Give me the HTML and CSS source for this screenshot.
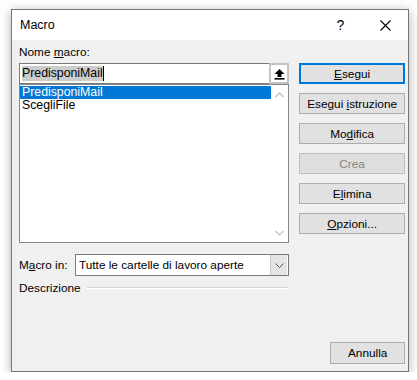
FILE: index.html
```html
<!DOCTYPE html>
<html lang="it">
<head>
<meta charset="utf-8">
<title>Macro</title>
<link rel="stylesheet" href="styles.css">
</head>
<body>
<div class="dialog">
  <div class="titlebar">
    <span class="title">Macro</span>
    <span class="cap-btn help">?</span>
    <span class="cap-btn close">
      <svg width="11" height="11" viewBox="0 0 11 11"><path d="M0.5 0.5 L10.5 10.5 M10.5 0.5 L0.5 10.5" stroke="#000" stroke-width="1.1" fill="none"/></svg>
    </span>
  </div>
  <div class="body">
    <div class="left">
      <div class="label">Nome <u>m</u>acro:</div>
      <div class="name-row">
        <div class="name-field"><span class="sel">PredisponiMail</span><span class="caret"></span></div>
        <div class="up-btn">
          <svg width="11" height="12" viewBox="0 0 11 12"><path d="M5.5 1 L10.5 6 H7.5 V9 H3.5 V6 H0.5 Z" fill="#000"/><rect x="0.5" y="10" width="10" height="1.6" fill="#000"/></svg>
        </div>
      </div>
      <div class="list">
        <div class="items">
          <div class="item selected">PredisponiMail</div>
          <div class="item">ScegliFile</div>
        </div>
        <div class="scrollbar">
          <svg width="9" height="6" viewBox="0 0 9 6"><path d="M0.5 5 L4.5 1 L8.5 5" stroke="#c2c2c2" stroke-width="1.4" fill="none"/></svg>
          <svg width="9" height="6" viewBox="0 0 9 6"><path d="M0.5 1 L4.5 5 L8.5 1" stroke="#c2c2c2" stroke-width="1.2" fill="none"/></svg>
        </div>
      </div>
      <div class="in-row">
        <span class="in-label">M<u>a</u>cro in:</span>
        <div class="combo">
          <span class="combo-text">Tutte le cartelle di lavoro aperte</span>
          <span class="combo-btn">
            <svg width="9" height="5" viewBox="0 0 9 5"><path d="M0.5 0.5 L4.5 4.5 L8.5 0.5" stroke="#555" stroke-width="1" fill="none"/></svg>
          </span>
        </div>
      </div>
      <div class="desc-row">
        <span>Descrizione</span>
        <span class="desc-line"></span>
      </div>
    </div>
    <div class="right">
      <div class="btn default"><span><u>E</u>segui</span></div>
      <div class="btn"><span>Esegui <u>i</u>struzione</span></div>
      <div class="btn"><span>Mo<u>d</u>ifica</span></div>
      <div class="btn disabled"><span>Crea</span></div>
      <div class="btn"><span>E<u>l</u>imina</span></div>
      <div class="btn"><span><u>O</u>pzioni...</span></div>
      <div class="btn cancel"><span>Annulla</span></div>
    </div>
  </div>
</div>
</body>
</html>
```

FILE: styles.css
```css
html, body {
  margin: 0;
  padding: 0;
  background: #ffffff;
}
body {
  padding: 9px 0 0 11px;
  font-family: "Liberation Sans", Arial, sans-serif;
  font-size: 11.8px;
  color: #000;
}
u { text-decoration: underline; text-underline-offset: 1px; }

.dialog {
  box-sizing: border-box;
  width: 398px;
  height: 363px;
  border: 1px solid #777777;
  background: #f0f0f0;
  box-shadow: 0 2px 10px rgba(0, 0, 0, 0.32);
  display: flex;
  flex-direction: column;
}

.titlebar {
  height: 30px;
  background: #ffffff;
  display: flex;
  align-items: center;
  padding-left: 8px;
}
.title {
  flex: 1;
  font-size: 12.5px;
}
.cap-btn {
  width: 45px;
  height: 30px;
  display: flex;
  align-items: center;
  justify-content: center;
}
.help { font-size: 14px; }

.body {
  flex: 1;
  display: flex;
  gap: 10px;
  padding: 0 3px 0 7px;
}

.left {
  width: 271px;
  display: flex;
  flex-direction: column;
}
.label {
  line-height: 15px;
  padding: 5px 0 3px;
}
.name-row {
  display: flex;
  height: 21px;
}
.name-field {
  box-sizing: border-box;
  flex: 1;
  border: 1px solid #7a7a7a;
  border-right: none;
  background: #fff;
  display: flex;
  align-items: center;
  padding-left: 2px;
  font-size: 12.3px;
}
.sel {
  background: #cccccc;
  line-height: 15px;
}
.caret {
  width: 1px;
  height: 15px;
  background: #000;
}
.up-btn {
  box-sizing: border-box;
  width: 20px;
  height: 21px;
  border: 2px solid #c4c4c4;
  background: #fff;
  display: flex;
  align-items: center;
  justify-content: center;
}

.list {
  box-sizing: border-box;
  height: 159px;
  border: 1px solid #828790;
  background: #fff;
  display: flex;
}
.items {
  flex: 1;
  padding-top: 1px;
}
.item {
  height: 13px;
  line-height: 13px;
  padding-left: 2px;
  font-size: 12.3px;
}
.item.selected {
  background: #0078d7;
  color: #fff;
}
.scrollbar {
  width: 17px;
  display: flex;
  flex-direction: column;
  justify-content: space-between;
  align-items: center;
  padding: 7px 0 6px;
  box-sizing: border-box;
}

.in-row {
  display: flex;
  align-items: center;
  margin-top: 11px;
  height: 22px;
}
.in-label {
  width: 56px;
}
.combo {
  box-sizing: border-box;
  flex: 1;
  height: 22px;
  border: 1px solid #7a7a7a;
  background: #fff;
  display: flex;
  align-items: center;
}
.combo-text {
  flex: 1;
  padding-left: 3px;
}
.combo-btn {
  width: 16px;
  height: 20px;
  background: #e5e5e5;
  border-left: 1px solid #c8c8c8;
  display: flex;
  align-items: center;
  justify-content: center;
  margin-right: 1px;
}

.desc-row {
  display: flex;
  align-items: center;
  gap: 6px;
  margin-top: 4px;
  height: 16px;
}
.desc-line {
  flex: 1;
  height: 0;
  border-top: 1px solid #d6d6d6;
  border-bottom: 1px solid #ffffff;
}

.right {
  width: 106px;
  display: flex;
  flex-direction: column;
  gap: 9px;
  padding: 23px 0 7px;
  box-sizing: border-box;
}
.btn {
  box-sizing: border-box;
  height: 21px;
  border: 1px solid #adadad;
  background: #e1e1e1;
  display: flex;
  align-items: center;
  justify-content: center;
}
.btn.default {
  border: 2px solid #0078d7;
}
.btn.disabled {
  color: #838383;
  border-color: #bfbfbf;
  background: #dedede;
}
.btn.cancel {
  margin-top: auto;
  margin-left: 31px;
  height: 22px;
}
```
